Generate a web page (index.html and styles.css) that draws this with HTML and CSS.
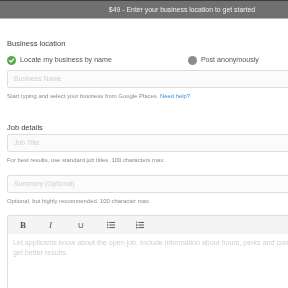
FILE: index.html
```html
<!DOCTYPE html>
<html>
<head>
<meta charset="utf-8">
<link rel="stylesheet" href="styles.css">
</head>
<body>
<div class="page">
  <div class="topbar">$49 - Enter your business location to get started</div>
  <div class="content">
    <h2 class="section-title first">Business location</h2>
    <div class="radio-row">
      <label class="radio">
        <span class="dot dot-on">
          <svg viewBox="0 0 10 10" width="7" height="7"><path d="M2.2 5.2 L4.2 7.1 L7.9 3.1" fill="none" stroke="#fff" stroke-width="1.8" stroke-linecap="round" stroke-linejoin="round"/></svg>
        </span>
        <span>Locate my business by name</span>
      </label>
      <label class="radio radio-second">
        <span class="dot dot-off"></span>
        <span>Post anonymously</span>
      </label>
    </div>
    <div class="input">Business Name</div>
    <p class="help">Start typing and select your business from Google Places. <a class="link">Need help?</a></p>

    <h2 class="section-title">Job details</h2>
    <div class="input">Job Title</div>
    <p class="help">For best results, use standard job titles. 100 characters max.</p>
    <div class="input input-gap">Summary (Optional)</div>
    <p class="help">Optional, but highly recommended. 100 character max.</p>

    <div class="editor">
      <div class="toolbar">
        <span class="tool tool-b">B</span>
        <span class="tool tool-i">I</span>
        <span class="tool tool-u">U</span>
        <span class="tool">
          <svg viewBox="0 0 10 10" width="8" height="8"><g fill="#555"><rect x="0" y="1" width="1.6" height="1.6"/><rect x="0" y="4.2" width="1.6" height="1.6"/><rect x="0" y="7.4" width="1.6" height="1.6"/><rect x="3" y="1.2" width="7" height="1.2"/><rect x="3" y="4.4" width="7" height="1.2"/><rect x="3" y="7.6" width="7" height="1.2"/></g></svg>
        </span>
        <span class="tool">
          <svg viewBox="0 0 10 10" width="8" height="8"><g fill="#555"><rect x="0.4" y="0.6" width="1" height="2.4"/><rect x="0" y="4.2" width="1.8" height="1.8"/><rect x="0" y="7.4" width="1.8" height="1.8"/><rect x="3" y="1.2" width="7" height="1.2"/><rect x="3" y="4.4" width="7" height="1.2"/><rect x="3" y="7.6" width="7" height="1.2"/></g></svg>
        </span>
      </div>
      <div class="editor-body">Let applicants know about the open job. Include information about hours, perks and company culture to get better results.</div>
    </div>
  </div>
</div>
</body>
</html>
```
FILE: styles.css
```css
html, body {
  margin: 0;
  padding: 0;
  overflow: hidden;
  background: #fff;
}
body {
  font-family: "Liberation Sans", Arial, sans-serif;
  color: #444;
  -webkit-font-smoothing: antialiased;
}
.page {
  width: 364px;
  will-change: transform;
}
.topbar {
  height: 17px;
  border-top: 1px solid #3c3c3c;
  border-bottom: 1px solid #b5b5b5;
  background: #707070;
  color: #f2f2f2;
  font-size: 6.9px;
  line-height: 17px;
  text-align: center;
}
.content {
  padding: 0 0 0 7px;
}
.section-title {
  margin: 0;
  font-weight: normal;
  font-size: 7.5px;
  line-height: 12px;
  color: #444;
}
.section-title.first {
  padding-top: 19px;
}
.radio-row {
  display: flex;
  align-items: center;
  margin-top: 4px;
  height: 12px;
  font-size: 7.1px;
  color: #555;
}
.radio {
  display: flex;
  align-items: center;
  gap: 4px;
}
.radio-second {
  margin-left: 76px;
}
.dot {
  width: 9px;
  height: 9px;
  border-radius: 50%;
  display: flex;
  align-items: center;
  justify-content: center;
}
.dot-on { background: #5aa84a; }
.dot-off { background: #8c8c8c; }
.input {
  margin-top: 4px;
  height: 16px;
  border: 1px solid #dedede;
  border-radius: 2px;
  background: #fbfbfb;
  font-size: 6.8px;
  line-height: 16px;
  color: #cfcfcf;
  padding-left: 6px;
}
.input-gap {
  margin-top: 10px;
}
.help {
  margin: 4px 0 0;
  font-size: 5.9px;
  line-height: 9px;
  color: #8a8a8a;
}
.link {
  color: #3a8fd8;
}
.section-title + .input {
  margin-top: 0;
}
.help + .section-title {
  margin-top: 21px;
}
.editor {
  margin-top: 9px;
  border: 1px solid #dedede;
  border-radius: 2px;
  height: 100px;
}
.toolbar {
  display: flex;
  align-items: center;
  height: 18px;
  background: #f4f4f4;
  padding-left: 12px;
}
.tool {
  width: 29px;
  display: flex;
  align-items: center;
  font-family: "Liberation Serif", serif;
  font-size: 9px;
  color: #555;
}
.tool-b { font-weight: bold; }
.tool-i { font-style: italic; }
.tool-u { font-family: "Liberation Sans", sans-serif; font-size: 8px; }
.editor-body {
  padding: 5px 5px 0 5px;
  font-size: 7.1px;
  line-height: 9.5px;
  color: #cfcfcf;
  width: 330px;
}
```
